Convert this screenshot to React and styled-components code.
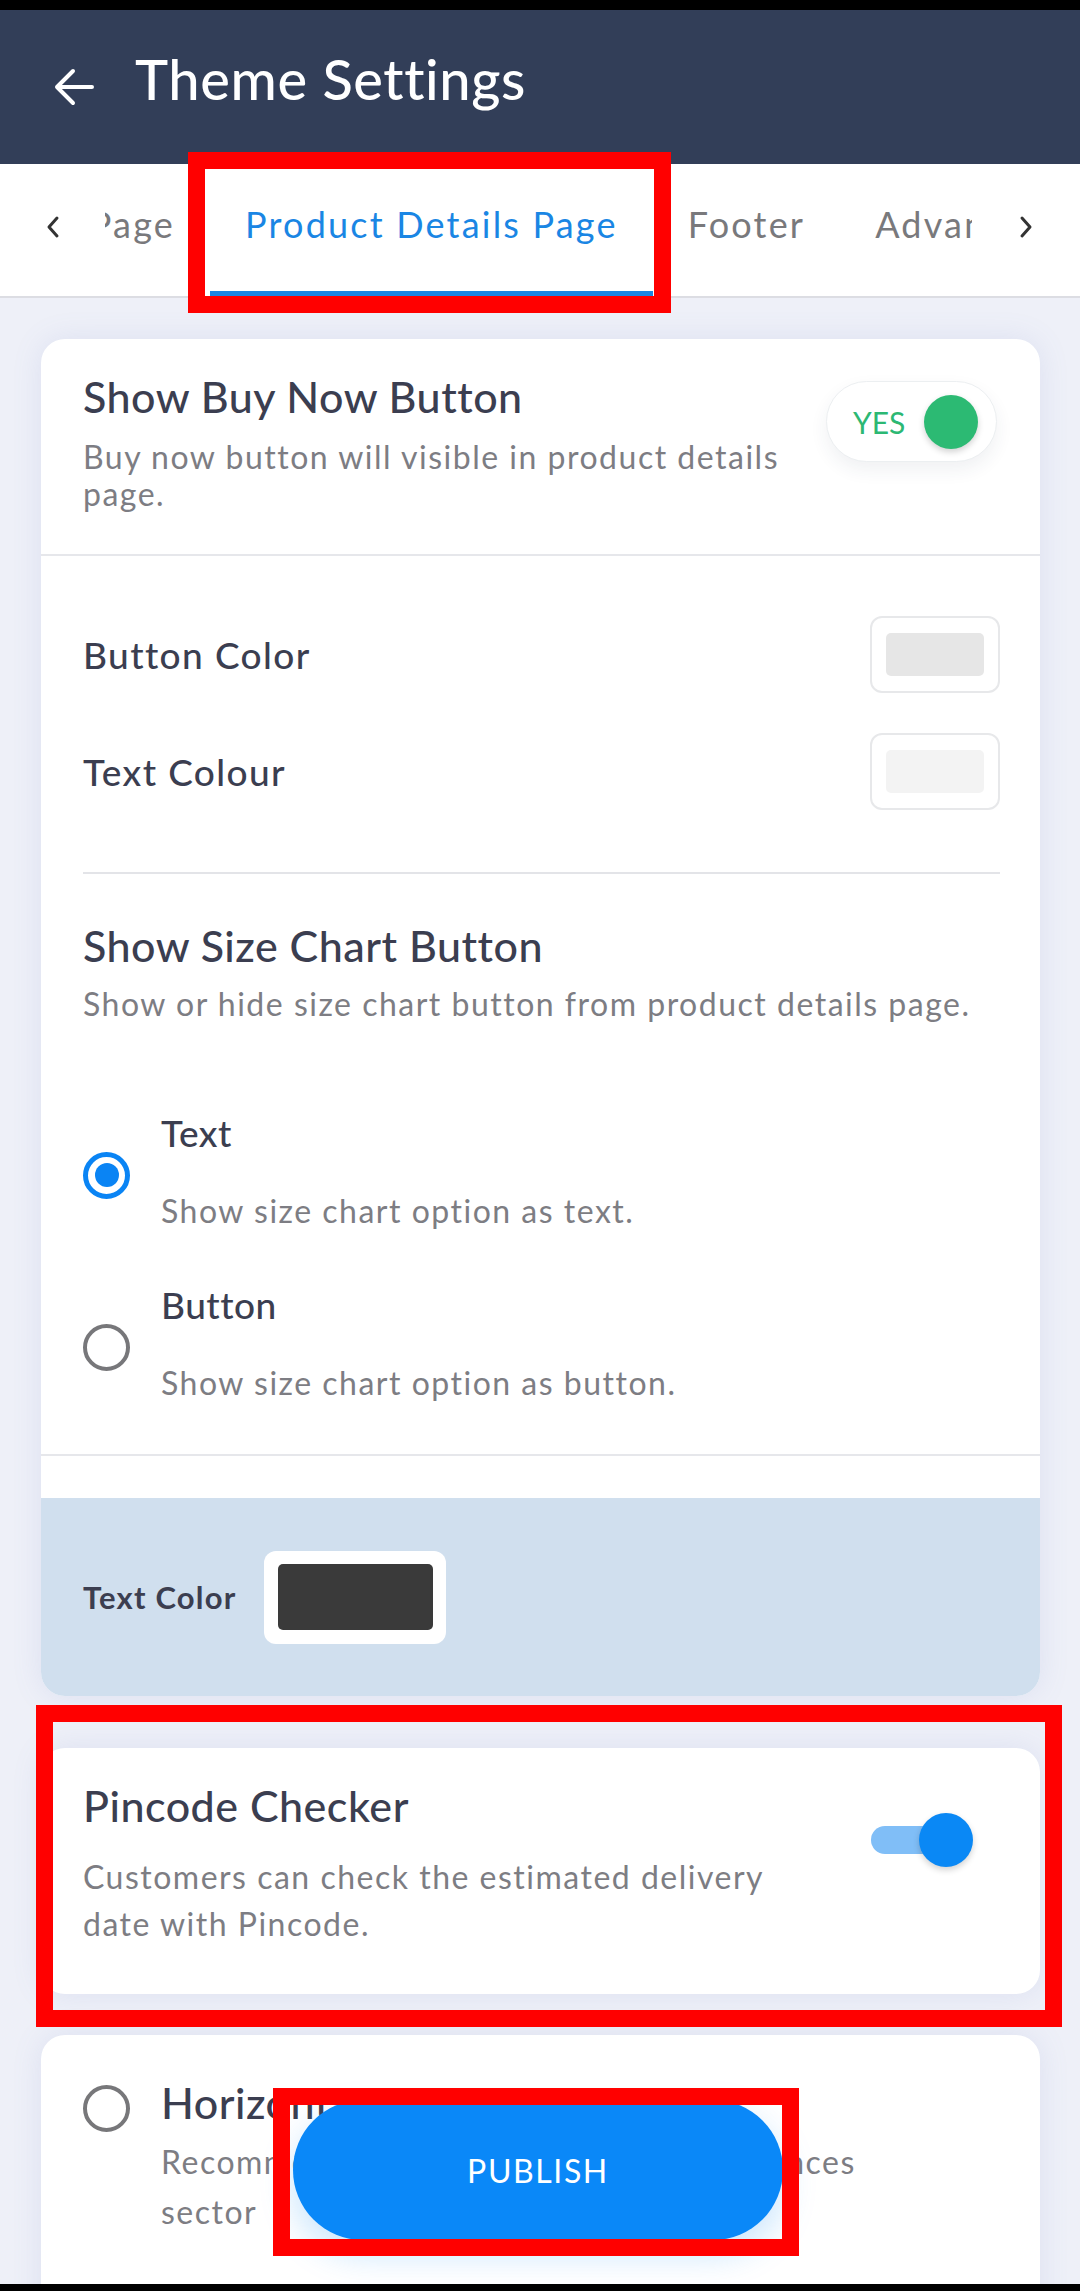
import React from "react";
import styled, { createGlobalStyle } from "styled-components";

const GlobalStyle = createGlobalStyle`
  html, body {
    margin: 0;
    padding: 0;
    background: #000;
  }
  body {
    font-family: Lato, "Open Sans", sans-serif;
  }
  * {
    box-sizing: border-box;
  }
`;

const Screen = styled.div`
  position: relative;
  width: 1080px;
  height: 2291px;
  display: flex;
  flex-direction: column;
  overflow: hidden;
  background: #eef0f8;
`;

const StatusBar = styled.div`
  height: 10px;
  background: #000;
  flex-shrink: 0;
`;

const BottomBar = styled.div`
  height: 7px;
  background: #000;
  flex-shrink: 0;
`;

const Header = styled.header`
  height: 154px;
  background: #323e58;
  display: flex;
  align-items: center;
  gap: 41px;
  padding-left: 54px;
  flex-shrink: 0;
`;

const BackButton = styled.button`
  border: 0;
  background: none;
  padding: 0;
  display: flex;
`;

const Title = styled.h1`
  margin: 0 0 16px;
  color: #fff;
  font-size: 56px;
  font-weight: 500;
  line-height: 1;
  letter-spacing: 0.6px;
`;

const TabBar = styled.nav`
  height: 134px;
  background: #fff;
  border-bottom: 2px solid #dcdde3;
  display: flex;
  flex-shrink: 0;
`;

const ChevronCell = styled.button`
  width: ${(p) => p.$w}px;
  flex-shrink: 0;
  border: 0;
  background: none;
  padding: 0 0 6px;
  display: flex;
  align-items: center;
  justify-content: center;
`;

const TabViewport = styled.div`
  flex: 1;
  overflow: hidden;
  display: flex;
`;

const TabTrack = styled.div`
  display: flex;
  flex-shrink: 0;
  margin-left: ${(p) => p.$offset}px;
`;

const Tab = styled.div`
  flex-shrink: 0;
  display: flex;
  align-items: center;
  justify-content: ${(p) => (p.$width ? "flex-end" : "center")};
  ${(p) => (p.$width ? `width: ${p.$width}px;` : "")}
  padding: 0 35px 7px;
  border-bottom: 5px solid ${(p) => (p.$active ? "#1a86e4" : "transparent")};
  color: ${(p) => (p.$active ? "#1a86e4" : "#79797c")};
  font-size: 36px;
  letter-spacing: 2.2px;
  white-space: nowrap;
`;

const Content = styled.main`
  position: relative;
  flex: 1;
  overflow: hidden;
  padding: 41px 40px 0 41px;
  display: flex;
  flex-direction: column;
`;

const Card = styled.section`
  flex-shrink: 0;
  margin-top: ${(p) => p.$mt || 0}px;
  background: #fff;
  border-radius: 24px;
  overflow: hidden;
  box-shadow: 0 0 30px rgba(110, 120, 190, 0.13);
`;

const SettingRow = styled.div`
  display: flex;
  align-items: flex-start;
  justify-content: space-between;
  padding: ${(p) => p.$pad};
  border-bottom: ${(p) => (p.$divided ? "2px solid #e6e7eb" : "0")};
`;

const TextBlock = styled.div`
  display: flex;
  flex-direction: column;
  max-width: ${(p) => p.$max || 900}px;
`;

const SettingTitle = styled.h2`
  margin: ${(p) => p.$mt || 0}px 0 0;
  font-size: 43px;
  font-weight: 500;
  line-height: 50px;
  letter-spacing: 0.5px;
  color: #3b3e50;
  white-space: nowrap;
`;

const SettingDesc = styled.p`
  margin: ${(p) => p.$mt || 0}px 0 0;
  font-size: 32px;
  line-height: ${(p) => p.$lh || 37}px;
  letter-spacing: 1.5px;
  color: #7d7d83;
`;

const YesToggle = styled.span`
  flex-shrink: 0;
  width: 171px;
  height: 81px;
  margin-top: 9px;
  border-radius: 41px;
  background: #fff;
  border: 1px solid #eceff1;
  box-shadow: 0 8px 18px rgba(40, 60, 90, 0.07);
  display: flex;
  align-items: center;
  justify-content: space-between;
  padding: 0 18px 0 26px;
`;

const YesText = styled.span`
  color: #2cb873;
  font-size: 30px;
`;

const Knob = styled.span`
  width: 54px;
  height: 54px;
  border-radius: 50%;
  background: ${(p) => p.$color};
  box-shadow: 0 3px 6px rgba(0, 0, 0, 0.18);
`;

const Switch = styled.span`
  position: relative;
  flex-shrink: 0;
  width: 102px;
  height: 54px;
  margin-top: 32px;
`;

const SwitchTrack = styled.span`
  position: absolute;
  left: 0;
  top: 13px;
  width: 72px;
  height: 28px;
  border-radius: 14px;
  background: #80bef7;
`;

const SwitchKnob = styled(Knob)`
  position: absolute;
  right: 0;
  top: 0;
`;

const Block = styled.div`
  padding: ${(p) => p.$pad};
  border-bottom: ${(p) => (p.$divided ? "2px solid #e6e7eb" : "0")};
`;

const ColorRow = styled.div`
  display: flex;
  align-items: center;
  justify-content: space-between;
  & + & {
    margin-top: 40px;
  }
`;

const ColorLabel = styled.span`
  font-size: 37px;
  font-weight: 500;
  letter-spacing: 1.4px;
  color: #3b3e50;
`;

const SwatchFrame = styled.div`
  width: 130px;
  height: 77px;
  border: 2px solid #e7e8ea;
  border-radius: 12px;
  padding: 15px 14px;
  display: flex;
`;

const SwatchFill = styled.div`
  flex: 1;
  border-radius: 5px;
  background: ${(p) => p.$color};
`;

const Divider = styled.hr`
  margin: 62px 0 0;
  border: 0;
  height: 2px;
  background: #e3e4e8;
`;

const RadioOption = styled.label`
  display: flex;
  align-items: center;
  gap: 31px;
  margin-top: ${(p) => p.$mt}px;
`;

const Radio = styled.span`
  flex-shrink: 0;
  width: 47px;
  height: 47px;
  margin-top: ${(p) => p.$offset || 0}px;
  align-self: ${(p) => (p.$top ? "flex-start" : "auto")};
  border-radius: 50%;
  border: ${(p) => (p.$checked ? "5px solid #0a84f4" : "4px solid #77777a")};
  display: flex;
  align-items: center;
  justify-content: center;
  &::after {
    content: "";
    width: 24px;
    height: 24px;
    border-radius: 50%;
    background: ${(p) => (p.$checked ? "#0a84f4" : "transparent")};
  }
`;

const OptionLabel = styled.span`
  display: block;
  font-size: 37px;
  font-weight: 500;
  line-height: 44px;
  letter-spacing: 0.5px;
  color: #3b3e50;
`;

const CardFooter = styled.div`
  margin-top: 42px;
  height: 198px;
  background: #d0dfee;
  display: flex;
  align-items: center;
  gap: 27px;
  padding-left: 42px;
`;

const FooterLabel = styled.span`
  font-size: 31px;
  font-weight: 700;
  letter-spacing: 1.2px;
  color: #3b3e50;
`;

const DarkSwatch = styled.div`
  width: 182px;
  height: 93px;
  background: #fff;
  border-radius: 12px;
  padding: 13px 13px 14px 14px;
  display: flex;
`;

const GalleryRow = styled.div`
  display: flex;
  align-items: flex-start;
  gap: 31px;
  padding: 43px 40px 140px 42px;
`;

const PublishButton = styled.button`
  position: absolute;
  left: 293px;
  bottom: 44px;
  width: 490px;
  height: 140px;
  border: 0;
  border-radius: 70px;
  background: #0a88f8;
  color: #fff;
  font-family: inherit;
  font-size: 32px;
  letter-spacing: 1.6px;
  box-shadow: 0 14px 34px rgba(10, 136, 248, 0.22);
`;

const Highlight = styled.div`
  position: absolute;
  left: ${(p) => p.$x}px;
  top: ${(p) => p.$y}px;
  width: ${(p) => p.$w}px;
  height: ${(p) => p.$h}px;
  border: 17px solid #ff0000;
  pointer-events: none;
`;

const BackArrow = () => (
  <svg width="40" height="38" viewBox="0 0 40 38" fill="none">
    <path
      d="M38 19H3M19 3L3 19l16 16"
      stroke="#fff"
      strokeWidth="4"
      strokeLinecap="round"
      strokeLinejoin="round"
    />
  </svg>
);

const Chevron = ({ dir }) => (
  <svg width="18" height="24" viewBox="0 0 18 24" fill="none">
    <path
      d={dir === "left" ? "M13 3L5 12l8 9" : "M5 3l8 9-8 9"}
      stroke="#333"
      strokeWidth="3"
      strokeLinecap="round"
      strokeLinejoin="round"
    />
  </svg>
);

export default function App() {
  return (
    <Screen>
      <GlobalStyle />
      <StatusBar />
      <Header>
        <BackButton aria-label="Back">
          <BackArrow />
        </BackButton>
        <Title>Theme Settings</Title>
      </Header>

      <TabBar>
        <ChevronCell $w={105} aria-label="Previous">
          <Chevron dir="left" />
        </ChevronCell>
        <TabViewport>
          <TabTrack $offset={-195}>
            <Tab $width={300}>Collection Page</Tab>
            <Tab $active>Product Details Page</Tab>
            <Tab>Footer</Tab>
            <Tab>Advanced</Tab>
          </TabTrack>
        </TabViewport>
        <ChevronCell $w={108} aria-label="Next">
          <Chevron dir="right" />
        </ChevronCell>
      </TabBar>

      <Content>
        <Card>
          <SettingRow $pad="33px 43px 42px 42px" $divided>
            <TextBlock $max={700}>
              <SettingTitle>Show Buy Now Button</SettingTitle>
              <SettingDesc $mt={16}>
                Buy now button will visible in product details page.
              </SettingDesc>
            </TextBlock>
            <YesToggle>
              <YesText>YES</YesText>
              <Knob $color="#2cba73" />
            </YesToggle>
          </SettingRow>

          <Block $pad="60px 40px 53px 42px" $divided>
            <ColorRow>
              <ColorLabel>Button Color</ColorLabel>
              <SwatchFrame>
                <SwatchFill $color="#e6e6e6" />
              </SwatchFrame>
            </ColorRow>
            <ColorRow>
              <ColorLabel>Text Colour</ColorLabel>
              <SwatchFrame>
                <SwatchFill $color="#f3f3f3" />
              </SwatchFrame>
            </ColorRow>
            <Divider />
            <SettingTitle $mt={47}>Show Size Chart Button</SettingTitle>
            <SettingDesc $mt={14}>
              Show or hide size chart button from product details page.
            </SettingDesc>
            <RadioOption $mt={89}>
              <Radio $checked $offset={10} />
              <div>
                <OptionLabel>Text</OptionLabel>
                <SettingDesc $mt={37}>Show size chart option as text.</SettingDesc>
              </div>
            </RadioOption>
            <RadioOption $mt={54}>
              <Radio $offset={10} />
              <div>
                <OptionLabel>Button</OptionLabel>
                <SettingDesc $mt={37}>
                  Show size chart option as button.
                </SettingDesc>
              </div>
            </RadioOption>
          </Block>

          <CardFooter>
            <FooterLabel>Text Color</FooterLabel>
            <DarkSwatch>
              <SwatchFill $color="#3a3a3a" />
            </DarkSwatch>
          </CardFooter>
        </Card>

        <Card $mt={52}>
          <SettingRow $pad="33px 67px 47px 42px">
            <TextBlock $max={740}>
              <SettingTitle>Pincode Checker</SettingTitle>
              <SettingDesc $mt={22} $lh={47}>
                Customers can check the estimated delivery date with Pincode.
              </SettingDesc>
            </TextBlock>
            <Switch>
              <SwitchTrack />
              <SwitchKnob $color="#0a88f5" />
            </Switch>
          </SettingRow>
        </Card>

        <Card $mt={41}>
          <GalleryRow>
            <Radio $top $offset={7} />
            <TextBlock $max={760}>
              <SettingTitle>Horizontal Image Gallery</SettingTitle>
              <SettingDesc $mt={9} $lh={50}>
                Recommended for electronics and appliances sector
              </SettingDesc>
            </TextBlock>
          </GalleryRow>
        </Card>

        <PublishButton>PUBLISH</PublishButton>
      </Content>
      <BottomBar />

      <Highlight $x={188} $y={152} $w={483} $h={161} />
      <Highlight $x={36} $y={1705} $w={1026} $h={322} />
      <Highlight $x={273} $y={2088} $w={526} $h={168} />
    </Screen>
  );
}
